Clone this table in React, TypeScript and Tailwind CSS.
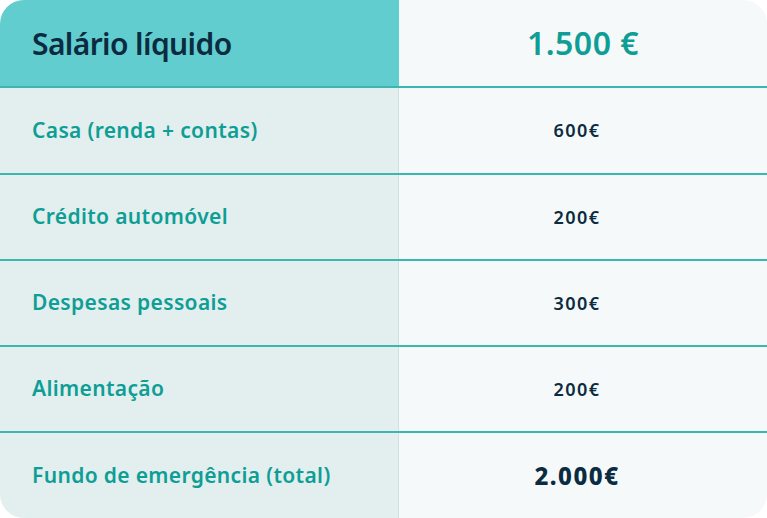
const rows = [
  { label: "Casa (renda + contas)", value: "600€", h: "h-[87px]" },
  { label: "Crédito automóvel", value: "200€", h: "h-[86px]" },
  { label: "Despesas pessoais", value: "300€", h: "h-[86px]" },
  { label: "Alimentação", value: "200€", h: "h-[86px]" },
];

export default function App() {
  return (
    <div className="w-[767px] h-[518px] bg-white font-['Noto_Sans',sans-serif]">
      <div className="w-full h-full rounded-[24px] overflow-hidden grid grid-cols-[398px_1px_1fr] bg-[#F5F9FA]">
        {/* header */}
        <div className="h-[86px] bg-[#62CDCF] flex items-center pl-8">
          <span className="text-[30px] font-semibold text-[#0B2B40] tracking-[-0.6px]">Salário líquido</span>
        </div>
        <div className="h-[86px] bg-[#62CDCF]" />
        <div className="h-[86px] flex items-center justify-center">
          <span className="text-[32px] font-semibold text-[#0E9E95] tracking-[0.5px]">1.500 €</span>
        </div>

        {rows.map((r) => (
          <Row key={r.label} label={r.label} h={r.h}>
            <span className="text-[18px] font-semibold text-[#0B2B40] tracking-[1.5px]">{r.value}</span>
          </Row>
        ))}

        <Row label="Fundo de emergência (total)" h="h-[87px]">
          <span className="text-[24px] font-extrabold text-[#0B2B40] tracking-[1.5px]">2.000€</span>
        </Row>
      </div>
    </div>
  );
}

function Row({ label, h, children }: { label: string; h: string; children: React.ReactNode }) {
  return (
    <>
      <div className={`${h} border-t-2 border-[#3CB7AF] bg-[#E3EFEF] flex items-center pl-8`}>
        <span className="text-[21px] font-semibold text-[#0E9E95] tracking-[0.35px]">{label}</span>
      </div>
      <div className={`${h} border-t-2 border-[#3CB7AF] bg-[#CFE0E0]`} />
      <div className={`${h} border-t-2 border-[#3CB7AF] flex items-center justify-center pr-3`}>
        {children}
      </div>
    </>
  );
}
